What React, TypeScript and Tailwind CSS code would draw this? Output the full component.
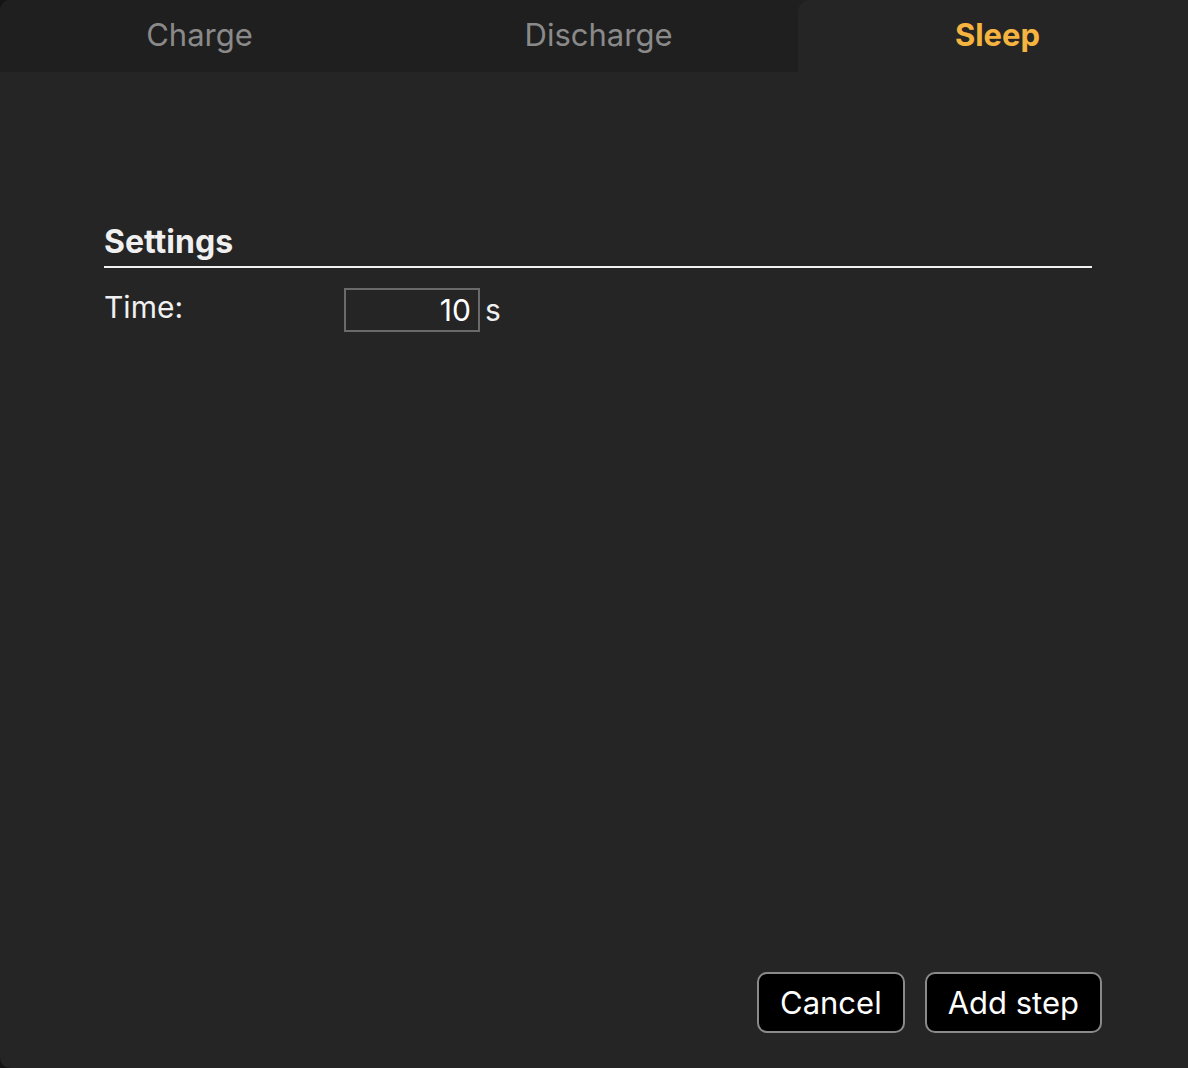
import React from "react";

export default function App() {
  const font = { fontFamily: "Inter, 'Noto Sans', sans-serif" };
  return (
    <div className="w-[1188px] h-[1068px] bg-[#141414] overflow-hidden" style={font}>
      <div className="w-full h-full flex flex-col bg-[#252525] rounded-l-[10px] overflow-hidden">
        <div className="h-[72px] flex shrink-0 bg-[#1f1f1f] overflow-hidden">
          <div className="w-[399px] shrink-0 flex items-center justify-center text-[31px] leading-[36px] text-[#8a8a8a] pb-[2px]">
            Charge
          </div>
          <div className="w-[399px] shrink-0 flex items-center justify-center text-[31px] leading-[36px] text-[#8a8a8a] pb-[2px]">
            Discharge
          </div>
          <div className="w-[399px] shrink-0 flex items-center justify-center text-[31px] leading-[36px] font-bold text-[#f5b43f] bg-[#252525] rounded-tl-[12px] pb-[2px]">
            Sleep
          </div>
        </div>
        <div className="flex-1 flex flex-col pl-[104px] pr-[96px]">
          <div className="mt-[152px] border-b-2 border-[#f2f2f2] pb-[6px]">
            <div className="text-[32px] leading-[36px] font-bold text-[#f0f0f0]">Settings</div>
          </div>
          <div className="mt-[20px] flex items-start">
            <div className="w-[240px] mt-[1px] text-[30px] leading-[36px] text-[#f0f0f0]">Time:</div>
            <div className="w-[136px] h-[44px] border-2 border-[#6a6a6a] flex items-center justify-end pr-[7px] text-[30px] leading-[36px] text-white">
              10
            </div>
            <div className="ml-[5px] mt-[4px] text-[30px] leading-[36px] text-[#f0f0f0]">s</div>
          </div>
          <div className="flex-1" />
          <div className="flex justify-end gap-[20px] pb-[35px] mr-[-10px]">
            <button className="h-[61px] px-[21px] bg-black border-2 border-[#8a8a8a] rounded-[10px] text-[31px] leading-[36px] text-white">
              Cancel
            </button>
            <button className="h-[61px] px-[21px] bg-black border-2 border-[#8a8a8a] rounded-[10px] text-[31px] leading-[36px] text-white">
              Add step
            </button>
          </div>
        </div>
      </div>
    </div>
  );
}
